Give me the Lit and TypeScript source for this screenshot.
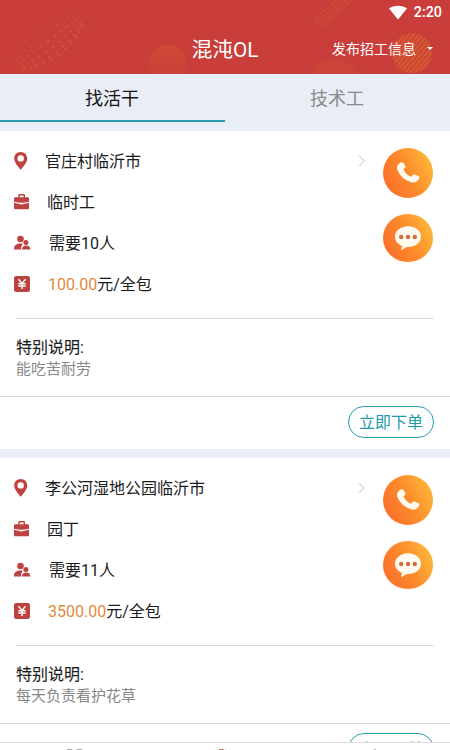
import { LitElement, html, css, svg } from "lit";
import { customElement, property } from "lit/decorators.js";

interface Job {
  place: string;
  kind: string;
  people: number;
  price: string;
  note: string;
}

const jobs: Job[] = [
  {
    place: "官庄村临沂市",
    kind: "临时工",
    people: 10,
    price: "100.00",
    note: "能吃苦耐劳",
  },
  {
    place: "李公河湿地公园临沂市",
    kind: "园丁",
    people: 11,
    price: "3500.00",
    note: "每天负责看护花草",
  },
];

const pinIcon = html`<svg class="icon" width="16" height="18" viewBox="0 0 16 18">
  <path fill-rule="evenodd" d="M6.700 0C2.900 0 .2 2.800.2 6.400c0 3.900 3.600 7.800 6.500 11.300 2.900-3.500 6.500-7.400 6.500-11.300C13.200 2.800 10.500 0 6.700 0zm0 3.200a3.200 3.200 0 1 1 0 6.400 3.200 3.200 0 0 1 0-6.400z" />
</svg>`;

const caseIcon = html`<svg class="icon" width="16" height="18" viewBox="0 0 16 18">
  <path fill-rule="evenodd" d="M4.300 4.300V2.500c0-.9.500-1.400 1.400-1.400h3.900c.9 0 1.400.5 1.400 1.400v1.800h2.500c1 0 1.500.5 1.500 1.500v3c-4.600 1.400-10.400 1.400-15 0v-3c0-1 .5-1.500 1.500-1.500zm1.400 0h3.900V2.500H5.700z" />
  <path d="M0 9.800c2 .7 4 1 6 1.100.3.800 2.700.8 3 0 2-.1 4-.4 6-1.100v4.900c0 1-.5 1.500-1.500 1.500h-12c-1 0-1.500-.5-1.500-1.500z" />
</svg>`;

const peopleIcon = html`<svg class="icon" width="17" height="18" viewBox="0 0 17 18">
  <circle cx="6.500" cy="5" r="3.300" />
  <path d="M0 15.600v-1.400C0 11.200 2.800 9.400 6.300 9.400c1 0 1.900.1 2.700.4-1.300 1.300-2 3.300-1.800 5.800z" />
  <circle cx="11.900" cy="8.600" r="2.500" />
  <path d="M8 15.600c0-2.700 1.500-4 4.100-4s4.200 1.300 4.200 4z" />
</svg>`;

const yenIcon = html`<svg class="icon" width="16" height="18" viewBox="0 0 16 18">
  <rect y="1" width="16" height="16" rx="2.200" />
  <path class="yen" d="M4.500 4.300 8 8.400l3.500-4.100M4.300 8.700h7.400M4.300 11h7.400M8 8.400v5.600" />
</svg>`;

// dotted swirl on the left side of the header, fading towards the top left
const swirl = () => {
  const dots = [];
  for (let row = 0; row < 7; row++) {
    for (let i = 0; i < 13; i++) {
      const u = Math.sin(((i - 6) / 6) * 1.4);
      const v = Math.sin(((row - 3) / 3) * 1.3);
      const spread = Math.sqrt(1 - u * u * 0.8);
      const x = 48 + u * 30 + v * 11 * spread;
      const y = 41 - u * 23 + v * 14 * spread;
      const r = 0.7 + spread * 0.7 * (1 - Math.abs(v) * 0.5);
      const fade = 0.2 + (row / 6) * 0.5;
      dots.push(svg`<circle cx=${x} cy=${y} r=${r} opacity=${fade} />`);
    }
  }
  return dots;
};

@customElement("job-card")
export class JobCard extends LitElement {
  @property({ attribute: false }) job!: Job;

  static styles = css`
    :host {
      display: block;
      flex: none;
      height: 318px;
      box-sizing: border-box;
      background: #fff;
      color: #1b1b1b;
      font-size: 16px;
    }

    .main {
      display: flex;
      justify-content: space-between;
      height: 187px;
      margin: 0 16px;
      border-bottom: 1px solid #d9d9d9;
    }

    .rows {
      padding-top: 9px;
      margin-left: -2px;
      width: 353px;
    }

    .row {
      display: flex;
      align-items: center;
      height: 41px;
    }

    .label {
      padding-bottom: 2px;
    }

    .icon {
      flex: none;
      fill: #bd4340;
    }

    .icon-box {
      width: 31px;
      display: flex;
    }

    .kind {
      padding-left: 2px;
    }

    .people {
      padding-left: 4px;
    }

    .price {
      padding-left: 3px;
    }

    .amount {
      color: #e08a3c;
    }

    .yen {
      fill: none;
      stroke: #fff;
      stroke-width: 1.4;
    }

    .arrow {
      margin-left: auto;
      fill: none;
      stroke: #d8d8d8;
      stroke-width: 1.2;
    }

    .actions {
      display: flex;
      flex-direction: column;
      gap: 16px;
      padding-top: 17px;
      margin-right: 1px;
    }

    .round {
      display: flex;
      align-items: center;
      justify-content: center;
      width: 50px;
      height: 50px;
      border-radius: 50%;
      background: linear-gradient(65deg, #fb702b 12%, #fd8b2b 50%, #fdbb3b 94%);
    }

    .round.chat {
      height: 48px;
      box-shadow: 0 0 3px #fff0e2;
    }

    .note {
      height: 78px;
      box-sizing: border-box;
      padding: 17px 16px 0;
      border-bottom: 1px solid #d9d9d9;
    }

    .note-title {
      line-height: 23px;
      -webkit-text-stroke: 0.1px #1b1b1b;
    }

    .note-text {
      line-height: 20px;
      font-size: 15px;
      color: #888;
    }

    .foot {
      display: flex;
      justify-content: flex-end;
      padding: 9px 16px 0;
    }

    .order {
      box-sizing: border-box;
      width: 86px;
      height: 32px;
      padding: 1px 0 0;
      border: 1px solid #2c9fb0;
      border-radius: 16px;
      background: none;
      color: #2199ad;
      font: inherit;
      line-height: 29px;
    }
  `;

  render() {
    const { place, kind, people, price, note } = this.job;
    return html`
      <div class="main">
        <div class="rows">
          <div class="row">
            <span class="icon-box">${pinIcon}</span>
            <span class="label">${place}</span>
            <svg class="arrow" width="10" height="14" viewBox="0 0 10 14">
              <path d="M2 2l5.500 5L2 12" />
            </svg>
          </div>
          <div class="row">
            <span class="icon-box">${caseIcon}</span>
            <span class="label kind">${kind}</span>
          </div>
          <div class="row">
            <span class="icon-box">${peopleIcon}</span>
            <span class="label people">需要${people}人</span>
          </div>
          <div class="row">
            <span class="icon-box">${yenIcon}</span>
            <span class="label price"><span class="amount">${price}</span>元/全包</span>
          </div>
        </div>
        <div class="actions">
          <div class="round">
            <svg width="24" height="24" viewBox="0 0 24 24" fill="#fffaf0">
              <path d="M4.800 1.600c1.200-.7 2.200-.4 2.900.7l1.500 2.600c.6 1 .2 1.900-.8 2.600-.9.600-.9 1.300-.3 2.300 1.500 2.400 3.500 4.200 5.900 5.400 1 .5 1.700.300 2.200-.6.600-1 1.500-1.500 2.600-1l3.400 1.500c1.200.6 1.500 1.500.9 2.700-1.400 2.800-4.200 4.300-7.300 3.600C9.300 19.900 3.200 14.700 1.200 8.300.4 5.500 1.800 3.200 4.800 1.600z" />
            </svg>
          </div>
          <div class="round chat">
            <svg width="26" height="26" viewBox="0 0 26 26">
              <path fill="#fffaf0" d="M13 1.200c7.100 0 13 4.400 13 10.500S20.100 22 13 22c-1 .1-1.900.3-2.600.7L6.200 25.300l.7-4.500C2.800 19.200 0 15.800 0 11.700 0 5.600 5.900 1.200 13 1.200z" />
              <g fill="#cf6f3d">
                <circle cx="6.200" cy="12" r="2.200" />
                <circle cx="13" cy="12" r="2.200" />
                <circle cx="19.800" cy="12" r="2.200" />
              </g>
            </svg>
          </div>
        </div>
      </div>
      <div class="note">
        <div class="note-title">特别说明:</div>
        <div class="note-text">${note}</div>
      </div>
      <div class="foot"><button class="order">立即下单</button></div>
    `;
  }
}

@customElement("app-root")
export class AppRoot extends LitElement {
  static styles = css`
    :host {
      display: flex;
      flex-direction: column;
      width: 450px;
      height: 750px;
      overflow: hidden;
      background: #e9edf5;
      font-family: Roboto, "Noto Sans CJK SC", sans-serif;
    }

    .header {
      position: relative;
      flex: none;
      display: flex;
      flex-direction: column;
      height: 74px;
      background: #c93e3a;
      color: #fff;
    }

    .decor {
      position: absolute;
      inset: 0;
    }

    .status {
      position: relative;
      display: flex;
      justify-content: flex-end;
      align-items: center;
      gap: 7px;
      height: 24px;
      padding-right: 8px;
      font-size: 14.3px;
      font-weight: 500;
    }

    .bar {
      position: relative;
      display: grid;
      grid-template-columns: 1fr auto 1fr;
      align-items: center;
      height: 50px;
    }

    .title {
      grid-column: 2;
      padding-bottom: 2px;
      font-size: 20.8px;
    }

    .publish {
      display: flex;
      align-items: center;
      justify-content: flex-end;
      gap: 11px;
      padding: 0 17px 2px 0;
      font-size: 14px;
    }

    .caret {
      border: 3px solid transparent;
      border-top-color: #fff;
      border-bottom: 0;
    }

    .tabs {
      flex: none;
      display: flex;
      height: 48px;
      margin-bottom: 9px;
    }

    .tab {
      flex: 1;
      box-sizing: border-box;
      padding-right: 1px;
      border-bottom: 2px solid transparent;
      text-align: center;
      font-size: 18px;
      line-height: 50px;
      color: #888;
    }

    .tab.active {
      color: #151515;
      border-color: #2c9cb0;
    }

    .list {
      flex: 1;
      display: flex;
      flex-direction: column;
      gap: 9px;
      min-height: 0;
      overflow: hidden;
    }

    .nav {
      flex: none;
      box-sizing: border-box;
      display: grid;
      grid-template-columns: repeat(3, 1fr);
      justify-items: center;
      height: 8px;
      padding-top: 6px;
      overflow: hidden;
      border-top: 1px solid #dedede;
      background: #fff;
    }

    .nav svg {
      fill: none;
      stroke: #858585;
      stroke-width: 1.5;
    }

    .nav .current {
      stroke: #bd4340;
    }
  `;

  render() {
    return html`
      <div class="header">
        <svg class="decor" width="450" height="74" viewBox="0 0 450 74">
          <defs>
            <linearGradient id="sun" x1="0" y1="0" x2="0" y2="1">
              <stop offset="0" stop-color="#d75731" />
              <stop offset="1" stop-color="#c93e3a" />
            </linearGradient>
            <pattern id="stripes" width="3.6" height="3.6" patternUnits="userSpaceOnUse" patternTransform="rotate(-50)">
              <rect width="3.6" height="1.6" fill="#dd6c2b" />
            </pattern>
          </defs>
          <g fill="#dc6433">${swirl()}</g>
          <circle cx="145" cy="52" r="22" fill="#d24335" opacity="0.15" />
          <circle cx="168" cy="64" r="19" fill="url(#sun)" opacity="0.45" />
          <ellipse cx="334" cy="74" rx="22" ry="13" fill="url(#sun)" opacity="0.3" />
          <g stroke="#d65b34" stroke-width="1.8" opacity="0.35">
            <path d="M314 20l22-20M316 23l26-23M319 25l28-25M322 27l30-27" />
          </g>
          <circle cx="412" cy="53" r="20" fill="#d45431" opacity="0.3" />
          <circle cx="412" cy="53" r="20" fill="url(#stripes)" opacity="0.65" />
        </svg>
        <div class="status">
          <svg width="18" height="15" viewBox="0 0 18 15">
            <path fill="#fff" d="M0 3.500C5 -.2 13 -.2 18 3.500L9 14.500z" />
          </svg>
          <span>2:20</span>
        </div>
        <div class="bar">
          <span class="title">混沌OL</span>
          <span class="publish">发布招工信息<i class="caret"></i></span>
        </div>
      </div>
      <div class="tabs">
        <div class="tab active">找活干</div>
        <div class="tab">技术工</div>
      </div>
      <div class="list">
        ${jobs.map((job) => html`<job-card .job=${job}></job-card>`)}
      </div>
      <div class="nav">
        <svg width="20" height="16" viewBox="0 0 20 16">
          <rect x="1.500" y="1" width="6.500" height="6.500" rx="2" />
          <rect x="11" y="1" width="6.500" height="6.500" rx="2" />
        </svg>
        <svg class="current" width="20" height="16" viewBox="0 0 20 16">
          <path d="M4 1h4l3 3M10 1l3 4" />
        </svg>
        <svg width="20" height="16" viewBox="0 0 20 16">
          <path d="M2 8l8-7 8 7" />
        </svg>
      </div>
    `;
  }
}
